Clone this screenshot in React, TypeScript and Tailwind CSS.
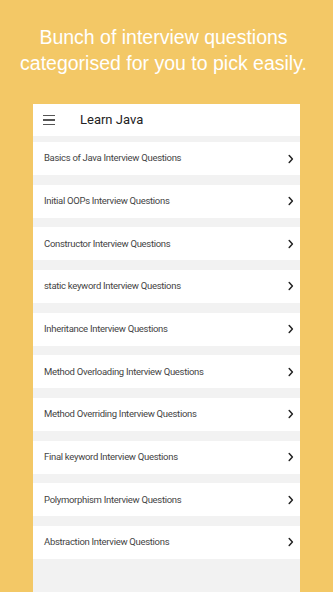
import React from 'react';

const topics = [
  'Basics of Java Interview Questions',
  'Initial OOPs Interview Questions',
  'Constructor Interview Questions',
  'static keyword Interview Questions',
  'Inheritance Interview Questions',
  'Method Overloading Interview Questions',
  'Method Overriding Interview Questions',
  'Final keyword Interview Questions',
  'Polymorphism Interview Questions',
  'Abstraction Interview Questions',
];

const Chevron = () => (
  <svg width="8" height="10" viewBox="0 0 8 10" fill="none" className="shrink-0">
    <path d="M2.2 1.6 L5.4 5 L2.2 8.4" stroke="#222" strokeWidth="1.5" strokeLinecap="round" strokeLinejoin="round" />
  </svg>
);

export default function App() {
  return (
    <div className="w-[333px] h-[592px] overflow-hidden bg-[#f3c866] flex flex-col items-center">
      {/* Title */}
      <div
        className="mt-[24px] pr-[6px] text-white text-[19.5px] leading-[26px] text-center"
        style={{ fontFamily: '"Liberation Sans", Arial, sans-serif' }}
      >
        <p>Bunch of interview questions</p>
        <p>categorised for you to pick easily.</p>
      </div>

      {/* Phone frame */}
      <div
        className="mt-[28px] w-[267px] flex-1 bg-[#f2f2f2] flex flex-col"
        style={{ fontFamily: 'Roboto, "Noto Sans", sans-serif' }}
      >
        <div className="h-[32px] bg-white flex items-center pl-[10px]">
          <div className="flex flex-col gap-[3px] w-[12px]">
            <span className="h-[1.5px] bg-[#555]" />
            <span className="h-[1.5px] bg-[#555]" />
            <span className="h-[1.5px] bg-[#555]" />
          </div>
          <span className="ml-[25px] text-[13px] text-[#222]">Learn Java</span>
        </div>

        <div className="pt-[6px] flex flex-col gap-[9.67px]">
          {topics.map((t) => (
            <div key={t} className="h-[33px] bg-white flex items-center justify-between pl-[11px] pr-[5px]">
              <span className="text-[9.5px] tracking-[-0.3px] text-[#444]">{t}</span>
              <Chevron />
            </div>
          ))}
        </div>
      </div>
    </div>
  );
}
